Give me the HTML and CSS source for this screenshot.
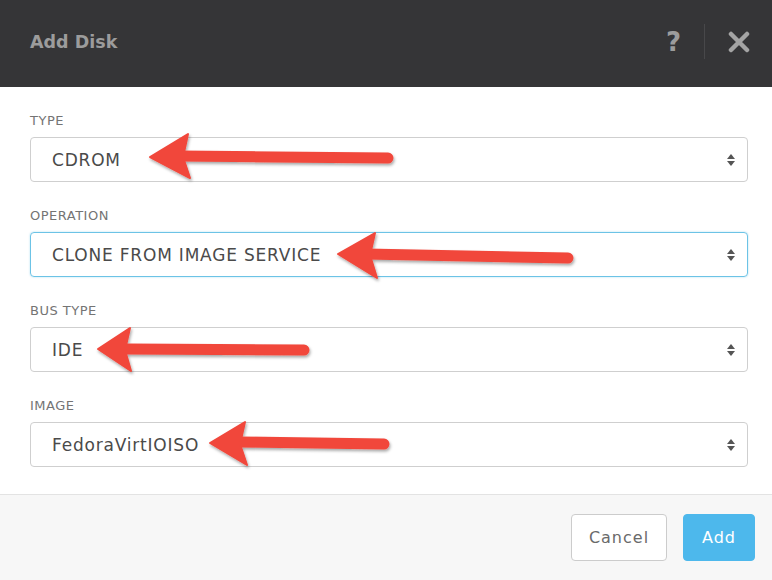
FILE: index.html
```html
<html>
<head>
  <title>Add Disk</title>
  <meta name="viewport" content="width=device-width, initial-scale=1.0">
  <link rel="stylesheet" href="styles.css">
</head>
<body>
  <div class="modal">
    <div class="modal-header">
      <h2>Add Disk</h2>
      <div class="header-actions">
        <span class="help">?</span>
        <span class="divider"></span>
        <svg class="close" width="22" height="22" viewBox="0 0 22 22">
          <path d="M3 3 L19 19 M19 3 L3 19" stroke="#a4a4a4" stroke-width="4.5" stroke-linecap="round"/>
        </svg>
      </div>
    </div>

    <div class="modal-body">
      <div class="field">
        <label>TYPE</label>
        <div class="select">CDROM<span class="caret"></span></div>
      </div>
      <div class="field">
        <label>OPERATION</label>
        <div class="select focused">CLONE FROM IMAGE SERVICE<span class="caret"></span></div>
      </div>
      <div class="field">
        <label>BUS TYPE</label>
        <div class="select">IDE<span class="caret"></span></div>
      </div>
      <div class="field">
        <label>IMAGE</label>
        <div class="select">FedoraVirtIOISO<span class="caret"></span></div>
      </div>
    </div>

    <div class="modal-footer">
      <button class="btn btn-default">Cancel</button>
      <button class="btn btn-primary">Add</button>
    </div>

    <!-- annotation arrows drawn over the form -->
    <svg class="arrows" width="772" height="580" viewBox="0 0 772 580">
      <defs>
        <filter id="shadow" x="-10%" y="-30%" width="130%" height="180%">
          <feDropShadow dx="1" dy="2" stdDeviation="1.8" flood-color="#000" flood-opacity="0.35"/>
        </filter>
      </defs>
      <g fill="#f1473b" stroke="#f1473b" filter="url(#shadow)">
        <line x1="178" y1="156" x2="388" y2="158" stroke-width="11" stroke-linecap="round"/>
        <polygon points="150,157 188,134 183,157 190,178" stroke-width="2" stroke-linejoin="round"/>

        <line x1="366" y1="254" x2="568" y2="258" stroke-width="11" stroke-linecap="round"/>
        <polygon points="338,254 375,233 370,255 377,278" stroke-width="2" stroke-linejoin="round"/>

        <line x1="126" y1="349" x2="304" y2="350" stroke-width="11" stroke-linecap="round"/>
        <polygon points="98,349 130,328 125,350 131,371" stroke-width="2" stroke-linejoin="round"/>

        <line x1="238" y1="442" x2="384" y2="444" stroke-width="11" stroke-linecap="round"/>
        <polygon points="210,443 245,422 240,444 247,465" stroke-width="2" stroke-linejoin="round"/>
      </g>
    </svg>
  </div>
</body>
</html>
```

FILE: styles.css
```css
body {
  margin: 0;
  background-color: #ffffff;
  font-family: "DejaVu Sans", "Liberation Sans", Arial, sans-serif;
}
.modal {
  position: relative;
  width: 772px;
  height: 580px;
  display: flex;
  flex-direction: column;
  overflow: hidden;
}
.modal-header {
  height: 87px;
  flex-shrink: 0;
  background-color: #353537;
  display: flex;
  align-items: center;
  justify-content: space-between;
  padding: 0 22px 4px 30px;
  box-sizing: border-box;
}
.modal-header h2 {
  margin: 0;
  font-size: 17.5px;
  font-weight: 700;
  color: #9c9c9c;
}
.header-actions {
  display: flex;
  align-items: center;
}
.help {
  font-size: 26px;
  font-weight: 700;
  color: #9c9c9c;
  margin-right: 23px;
}
.divider {
  width: 1px;
  height: 35px;
  background-color: #48484a;
  margin-right: 23px;
}
.close {
  display: block;
}
.modal-body {
  flex: 1;
  padding: 27px 24px 0 30px;
}
.field {
  margin-bottom: 27px;
}
.field label {
  display: block;
  font-size: 13px;
  line-height: 14px;
  letter-spacing: 0.5px;
  color: #747474;
  margin-bottom: 9px;
}
.select {
  position: relative;
  height: 45px;
  box-sizing: border-box;
  border: 1px solid #cfcfcf;
  border-radius: 4px;
  padding: 0 21px;
  display: flex;
  align-items: center;
  font-size: 17px;
  letter-spacing: 0.8px;
  color: #4a4a4a;
}
.select.focused {
  border-color: #6cc3e6;
  box-shadow: 0 0 2px rgba(108, 195, 230, 0.6);
}
.caret {
  position: absolute;
  right: 16px;
  top: 16px;
  width: 0;
  height: 0;
}
.caret::before,
.caret::after {
  content: "";
  position: absolute;
  left: -4px;
  border-left: 4px solid transparent;
  border-right: 4px solid transparent;
}
.caret::before {
  top: 0;
  border-bottom: 5px solid #555555;
}
.caret::after {
  top: 7px;
  border-top: 5px solid #555555;
}
.modal-footer {
  height: 86px;
  flex-shrink: 0;
  border-top: 1px solid #e3e3e3;
  background-color: #f7f7f7;
  box-sizing: border-box;
  display: flex;
  justify-content: flex-end;
  align-items: flex-start;
  padding: 19px 17px 0 0;
  gap: 16px;
}
.btn {
  height: 47px;
  border-radius: 4px;
  font-family: inherit;
  font-size: 16px;
  letter-spacing: 1px;
  padding: 0;
  cursor: pointer;
}
.btn-default {
  width: 96px;
  background-color: #ffffff;
  border: 1px solid #cccccc;
  color: #6a6a6a;
}
.btn-primary {
  width: 72px;
  background-color: #4db8ec;
  border: 1px solid #4db8ec;
  color: #ffffff;
}
.arrows {
  position: absolute;
  left: 0;
  top: 0;
  pointer-events: none;
}
```
